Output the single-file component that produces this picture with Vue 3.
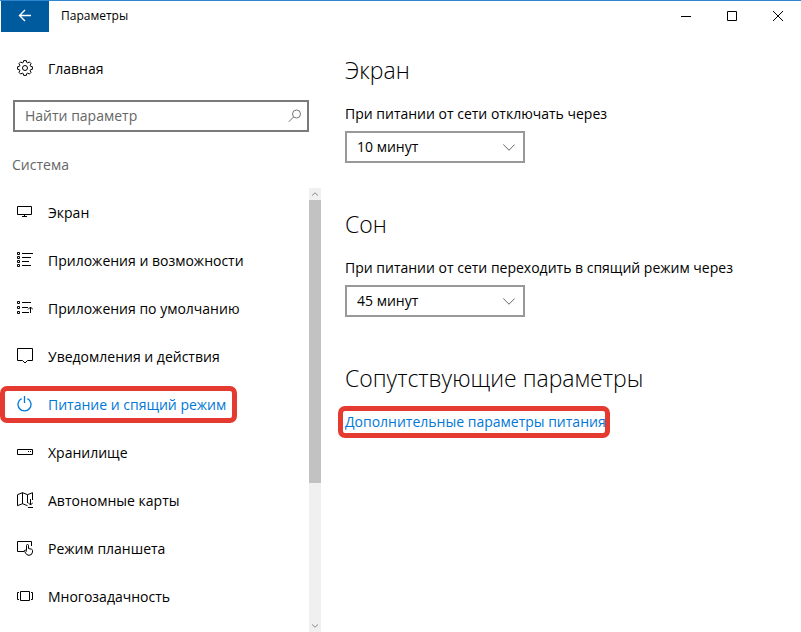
<script setup>
import { ref } from 'vue'

const query = ref('')
const screenOff = ref('10 минут')
const sleepAfter = ref('45 минут')
const options = ['5 минут', '10 минут', '15 минут', '30 минут', '45 минут', '1 час', 'Никогда']

const items = [
  { id: 'display', label: 'Экран' },
  { id: 'apps', label: 'Приложения и возможности' },
  { id: 'defaults', label: 'Приложения по умолчанию' },
  { id: 'notify', label: 'Уведомления и действия' },
  { id: 'power', label: 'Питание и спящий режим', active: true },
  { id: 'storage', label: 'Хранилище' },
  { id: 'maps', label: 'Автономные карты' },
  { id: 'tablet', label: 'Режим планшета' },
  { id: 'multi', label: 'Многозадачность' },
]
</script>

<template>
  <div class="window">
    <header class="titlebar">
      <button class="back" type="button" aria-label="Назад">
        <svg width="16" height="16" viewBox="0 0 16 16"><path d="M14 7.5H2.5M8 2L2.5 7.5L8 13" /></svg>
      </button>
      <span class="title">Параметры</span>
      <div class="controls">
        <button type="button" aria-label="Свернуть">
          <svg width="10" height="10" viewBox="0 0 10 10"><path d="M0 5.5H10" /></svg>
        </button>
        <button type="button" aria-label="Развернуть">
          <svg width="10" height="10" viewBox="0 0 10 10"><path d="M.5 .5H9.5V9.5H.5Z" /></svg>
        </button>
        <button type="button" aria-label="Закрыть">
          <svg width="10" height="10" viewBox="0 0 10 10"><path d="M0 0L10 10M10 0L0 10" /></svg>
        </button>
      </div>
    </header>

    <div class="body">
      <aside class="sidebar">
        <a class="item home" href="#home">
          <svg class="icon" width="16" height="16" viewBox="0 0 16 16">
            <path d="M6.7 .6H9.3L9.7 2.4L10.8 2.9L12.3 1.9L14.1 3.7L13.1 5.2L13.6 6.3L15.4 6.7V9.3L13.6 9.7L13.1 10.8L14.1 12.3L12.3 14.1L10.8 13.1L9.7 13.6L9.3 15.4H6.7L6.3 13.6L5.2 13.1L3.7 14.1L1.9 12.3L2.9 10.8L2.4 9.7L.6 9.3V6.7L2.4 6.3L2.9 5.2L1.9 3.7L3.7 1.9L5.2 2.9L6.3 2.4Z" />
            <circle cx="8" cy="8" r="2.5" />
          </svg>
          <span>Главная</span>
        </a>
        <label class="search">
          <input v-model="query" type="text" placeholder="Найти параметр" aria-label="Найти параметр" />
          <svg width="14" height="14" viewBox="0 0 14 14"><circle cx="8.5" cy="5" r="4" /><path d="M5.6 7.9L.8 12.8" /></svg>
        </label>
        <h2 class="group">Система</h2>
        <div class="scroller">
          <nav class="list">
            <a v-for="it in items" :key="it.id" class="item" :class="{ active: it.active }" :href="'#' + it.id">
              <svg class="icon" width="16" height="16" viewBox="0 0 16 16">
                <template v-if="it.id === 'display'">
                  <path d="M.5 2.5H14.5V10.5H.5ZM7.5 10.5V13M5 12.5H10" />
                </template>
                <template v-else-if="it.id === 'apps'">
                  <path d="M.5 .5H2.5V2.5H.5ZM.5 4.5H2.5V6.5H.5ZM.5 8.5H2.5V10.5H.5ZM.5 12.5H2.5V14.5H.5ZM5 1.5H16M5 5.5H14M5 9.5H12M5 13.5H14" />
                </template>
                <template v-else-if="it.id === 'defaults'">
                  <path d="M.5 1.5H2.5V3.5H.5ZM.5 6.5H2.5V8.5H.5ZM.5 11.5H2.5V13.5H.5ZM5 2.5H14M5 7.5H11M5 12.5H12M13.5 13V7M11 9.5L13.5 7L16 9.5" />
                </template>
                <template v-else-if="it.id === 'notify'">
                  <path d="M.5 .5H15.5V12.5H10.5L8 15L5.5 12.5H.5Z" />
                </template>
                <template v-else-if="it.id === 'power'">
                  <path stroke-width="1.3" d="M7.5 0V7M4.6 2.6A6.5 6.5 0 1 0 10.4 2.6" />
                </template>
                <template v-else-if="it.id === 'storage'">
                  <path d="M.5 5.5H15.5V10.5H.5ZM11 7.5H12M13 7.5H14" />
                </template>
                <template v-else-if="it.id === 'maps'">
                  <path d="M.5 2.7L5.5 .7L10.5 2.7L15.5 .7V8M.5 2.7V13.7L5.5 11.7L10.5 13.7M5.5 .7V11.7M10.5 2.7V11M13.5 7V13M11 10.5L13.5 13L16 10.5M11 15.5H16" />
                </template>
                <template v-else-if="it.id === 'tablet'">
                  <path d="M7 11.5H.5V1.5H14.5V6M9.5 10.5V5.5Q9.5 4.5 10.5 4.5T11.5 5.5V8.5L14.5 9.2Q15.5 9.5 15.5 10.5V12Q15.2 15.3 12 15.3Q9.5 15.3 8.5 13L7.3 10.5Q8 9.4 9.5 10.8V11.5" />
                </template>
                <template v-else>
                  <path d="M3.5 3.5H12.5V12.5H3.5ZM2 4.5H.5V11.5H2M14 4.5H15.5V11.5H14" />
                </template>
              </svg>
              <span>{{ it.label }}</span>
            </a>
          </nav>
          <div class="scrollbar" aria-hidden="true">
            <span class="arrow"><svg width="6" height="4" viewBox="0 0 6 4"><path d="M0 3.5L3 .8L6 3.5" /></svg></span>
            <span class="thumb"></span>
            <span class="track"></span>
            <span class="arrow"><svg width="6" height="4" viewBox="0 0 6 4"><path d="M0 .5L3 3.2L6 .5" /></svg></span>
          </div>
        </div>
      </aside>

      <main class="content">
        <section>
          <h1>Экран</h1>
          <label for="screen-off">При питании от сети отключать через</label>
          <div class="select">
            <select id="screen-off" v-model="screenOff">
              <option v-for="o in options" :key="o">{{ o }}</option>
            </select>
            <svg width="12" height="7" viewBox="0 0 12 7"><path d="M.3 .5L6 6.2L11.7 .5" /></svg>
          </div>
        </section>
        <section>
          <h1>Сон</h1>
          <label for="sleep-after">При питании от сети переходить в спящий режим через</label>
          <div class="select">
            <select id="sleep-after" v-model="sleepAfter">
              <option v-for="o in options" :key="o">{{ o }}</option>
            </select>
            <svg width="12" height="7" viewBox="0 0 12 7"><path d="M.3 .5L6 6.2L11.7 .5" /></svg>
          </div>
        </section>
        <section>
          <h1>Сопутствующие параметры</h1>
          <a class="related" href="#advanced">Дополнительные параметры питания</a>
        </section>
      </main>
    </div>
  </div>
</template>

<style>
body {
  margin: 0;
  background: #fff;
}
</style>

<style scoped>
* {
  box-sizing: border-box;
}
.window {
  display: flex;
  flex-direction: column;
  height: 100vh;
  border-top: 1px solid #2f86d0;
  color: #000;
  font: 14px/20px "Open Sans", "Noto Sans", sans-serif;
}
svg {
  display: block;
  flex: none;
  fill: none;
  stroke: currentColor;
  stroke-width: 1;
}
button {
  display: flex;
  align-items: center;
  justify-content: center;
  padding: 0 0 1px;
  border: 0;
  background: none;
  color: inherit;
}
.titlebar {
  display: flex;
  flex: none;
  height: 31px;
  padding-left: 1px;
}
.back {
  width: 48px;
  background: #005a9e;
  color: #fff;
}
.back svg {
  stroke-width: 1.4;
}
.title {
  padding-left: 12px;
  font-size: 12px;
  line-height: 30px;
}
.controls {
  display: flex;
  margin-left: auto;
}
.controls button {
  width: 46px;
}
.body {
  display: flex;
  flex: 1;
  min-height: 0;
}
.sidebar {
  display: flex;
  flex: none;
  flex-direction: column;
  width: 321px;
  padding-top: 12px;
}
.item {
  display: flex;
  flex: none;
  align-items: center;
  gap: 15px;
  height: 48px;
  padding-left: 17px;
  color: #000;
  text-decoration: none;
}
.item span {
  padding-top: 2px;
}
.search {
  display: flex;
  flex: none;
  align-items: center;
  height: 32px;
  margin: 8px 12px 0 13px;
  padding: 0 5px 0 10px;
  border: 2px solid #7a7a7a;
  color: #767676;
}
.search input {
  flex: 1;
  min-width: 0;
  padding: 0;
  border: 0;
  outline: 0;
  background: none;
  font: inherit;
}
.search input::placeholder {
  color: #666;
  opacity: 1;
}
.group {
  margin: 23px 0 13px 12px;
  color: #666;
  font-size: 14px;
  font-weight: 400;
  line-height: 20px;
}
.scroller {
  display: flex;
  flex: 1;
  min-height: 0;
}
.list {
  flex: 1;
  overflow: hidden;
}
.active {
  width: 237px;
  height: 37px;
  margin: 6px 0 5px;
  padding: 0 0 1px 12px;
  border: 5px solid #e53a2f;
  border-radius: 7px;
  color: #0078d7;
}
.scrollbar {
  display: flex;
  flex-direction: column;
  width: 12px;
  background: #f0f0f0;
}
.arrow {
  display: flex;
  flex: none;
  align-items: center;
  justify-content: center;
  height: 12px;
  color: #888;
}
.thumb {
  flex: 283;
  background: #c2c2c2;
}
.track {
  flex: 137;
}
.content {
  display: flex;
  flex: 1;
  flex-direction: column;
  gap: 45px;
  min-width: 0;
  padding: 22px 24px 0;
}
h1 {
  margin: 0 0 18px;
  font-size: 23px;
  font-weight: 300;
  line-height: 32px;
}
.content label {
  display: block;
  margin-bottom: 7px;
}
.select {
  position: relative;
  width: 180px;
}
.select select {
  display: block;
  width: 100%;
  height: 32px;
  padding: 0 30px 0 10px;
  border: 2px solid #999;
  border-radius: 0;
  appearance: none;
  background: #fff;
  color: #000;
  font: inherit;
}
.select svg {
  position: absolute;
  top: 13px;
  right: 10px;
  color: #666;
  pointer-events: none;
}
.related {
  display: block;
  width: 272px;
  margin: -6px 0 0 -7px;
  padding: 0 2px;
  border: 5px solid #e53a2f;
  border-radius: 7px;
  color: #0078d7;
  line-height: 22px;
  text-decoration: none;
  white-space: nowrap;
}
</style>
